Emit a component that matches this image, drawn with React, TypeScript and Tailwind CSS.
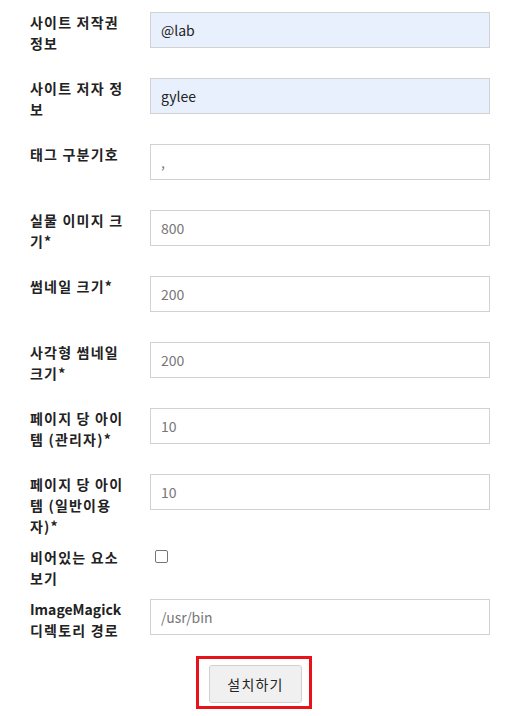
import React from 'react';

type Field = {
  label: React.ReactNode;
  key: string;
  value?: string;
  placeholder?: string;
  filled?: boolean;
  type?: 'text' | 'checkbox';
};

const fields: Field[] = [
  { key: 'copyright', label: '사이트 저작권 정보', value: '@lab', filled: true },
  { key: 'author', label: '사이트 저자 정보', value: 'gylee', filled: true },
  { key: 'tagsep', label: '태그 구분기호', placeholder: ',' },
  { key: 'imgsize', label: '실물 이미지 크기*', placeholder: '800' },
  { key: 'thumb', label: '썸네일 크기*', placeholder: '200' },
  { key: 'square', label: '사각형 썸네일 크기*', placeholder: '200' },
  { key: 'adminpp', label: '페이지 당 아이템 (관리자)*', placeholder: '10' },
  { key: 'userpp', label: '페이지 당 아이템 (일반이용자)*', placeholder: '10' },
  { key: 'empty', label: '비어있는 요소 보기', type: 'checkbox' },
  {
    key: 'magick',
    label: (
      <>
        <span className="tracking-normal">ImageMagick</span> 디렉토리 경로
      </>
    ),
    placeholder: '/usr/bin',
  },
];

export default function App() {
  return (
    <div className="min-h-[716px] bg-white font-['Noto_Sans_CJK_KR','Noto_Sans',sans-serif] text-[14px] text-[#222]">
      <form className="pl-[30px] pt-[12px]" onSubmit={e => e.preventDefault()}>
        {fields.map(f => (
          <div key={f.key} className="flex items-start">
            <label className="w-[100px] shrink-0 pb-[10px] font-bold leading-[21px] tracking-[1.2px] text-[#222]">
              {f.label}
            </label>
            <div className="ml-[20px]">
              {f.type === 'checkbox' ? (
                <input
                  type="checkbox"
                  className="mt-[3px] ml-[5px] h-[13px] w-[13px] appearance-none rounded-[2px] border border-[#767676] bg-white"
                />
              ) : (
                <input
                  type="text"
                  defaultValue={f.value}
                  placeholder={f.placeholder}
                  className={
                    'mb-[30px] block h-[36px] w-[340px] border border-[#d2d2d2] px-[10px] text-[14px] text-[#222] outline-none placeholder:text-[#777] ' +
                    (f.filled ? 'bg-[#e8f0fe]' : 'bg-white')
                  }
                />
              )}
            </div>
          </div>
        ))}
        <div className="flex justify-center pr-[30px]">
          <div className="relative">
            <button
              type="submit"
              className="h-[38px] w-[93px] rounded-[3px] border border-[#d0d0d0] bg-[#f0f0f0] text-[14px] tracking-[1.2px] text-[#222]"
            >
              설치하기
            </button>
            <div className="pointer-events-none absolute top-[-9px] bottom-[-6px] left-[-13px] right-[-10px] border-[3px] border-[#e8121b]" />
          </div>
        </div>
      </form>
    </div>
  );
}
